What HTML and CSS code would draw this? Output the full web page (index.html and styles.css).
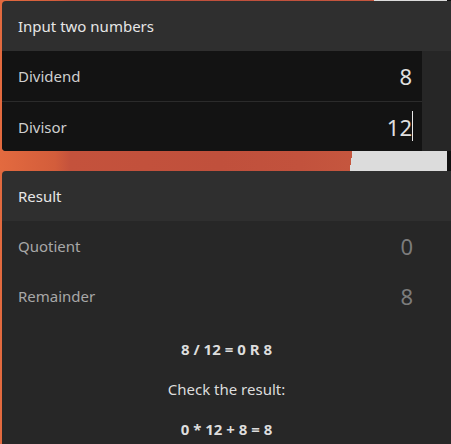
FILE: index.html
```html
<!DOCTYPE html>
<html>
<head>
<meta charset="utf-8">
<link rel="stylesheet" href="styles.css">
</head>
<body>
<div class="page">
  <section class="card card-input">
    <div class="card-header">Input two numbers</div>
    <div class="rows-wrap">
      <div class="inputs">
        <div class="row input-row">
          <span class="label">Dividend</span>
          <span class="value">8</span>
        </div>
        <div class="row input-row">
          <span class="label">Divisor</span>
          <span class="value">12<span class="caret"></span></span>
        </div>
      </div>
      <div class="side"></div>
    </div>
  </section>
  <section class="card card-result">
    <div class="card-header">Result</div>
    <div class="result-body">
      <div class="row">
        <span class="label dim">Quotient</span>
        <span class="value dimval">0</span>
      </div>
      <div class="row">
        <span class="label dim">Remainder</span>
        <span class="value dimval">8</span>
      </div>
      <div class="summary">
        <p class="bold">8 / 12 = 0 R 8</p>
        <p>Check the result:</p>
        <p class="bold">0 * 12 + 8 = 8</p>
      </div>
    </div>
  </section>
</div>
</body>
</html>
```
FILE: styles.css
```css
html, body {
  margin: 0;
  padding: 0;
  height: 444px;
  overflow: hidden;
}
body {
  font-family: "Noto Sans", "Open Sans", sans-serif;
  background:
    linear-gradient(90deg, transparent 447px, #111111 447px),
    linear-gradient(98deg, transparent 370px, #dcdcdc 370px),
    linear-gradient(90deg, #e36a3f 0px, #d35d3b 55px, #c4523c 70px, #c0503c 220px, #c2523d 300px, #c5563e 350px);
}
.page {
  padding: 1px 0 0 2px;
  display: flex;
  flex-direction: column;
  gap: 20px;
}
.card {
  border-radius: 4px 0 0 4px;
  overflow: hidden;
}
.card-header {
  height: 50px;
  background: #2f2f2f;
  color: #e6e6e6;
  font-size: 15px;
  padding-left: 16px;
  display: flex;
  align-items: center;
}
.rows-wrap {
  display: flex;
  background: #262626;
}
.inputs {
  width: 420px;
  background: #131313;
}
.side {
  flex: 1;
}
.row {
  height: 50px;
  display: flex;
  align-items: center;
  justify-content: space-between;
  padding: 0 10px 0 16px;
}
.input-row + .input-row {
  border-top: 1px solid #2b2b2b;
  height: 49px;
}
.label {
  color: #cfcfcf;
  font-size: 15px;
}
.value {
  color: #e0e0e0;
  font-size: 22px;
  position: relative;
  line-height: 1;
}
.caret {
  position: absolute;
  right: -1px;
  top: -5px;
  width: 1px;
  height: 30px;
  background: #e8e8e8;
}
.result-body {
  background: #272727;
  height: 230px;
}
.card-result .row {
  padding-right: 38px;
}
.dim {
  color: #a8a8a8;
}
.dimval {
  color: #7c7c7c;
}
.summary {
  display: flex;
  flex-direction: column;
  align-items: center;
  padding-top: 18px;
  gap: 20px;
  color: #dddddd;
  font-size: 15px;
}
.summary p {
  margin: 0;
  line-height: 20px;
}
.bold {
  font-weight: 700;
}
```
